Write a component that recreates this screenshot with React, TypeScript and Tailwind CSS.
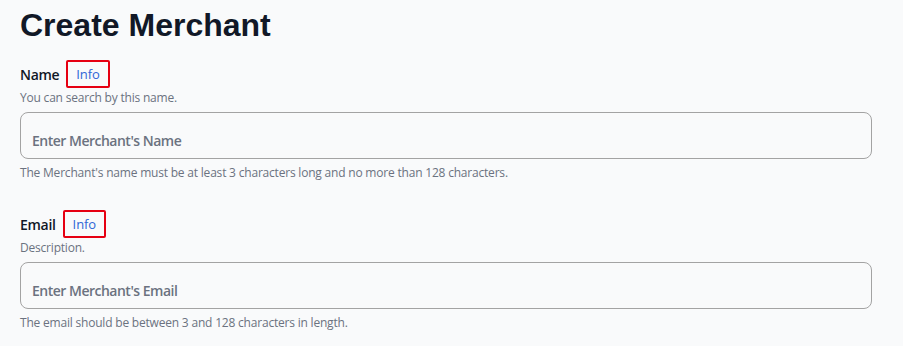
import React from "react";

const Field: React.FC<{
  label: string;
  hint: string;
  placeholder: string;
  rule: string;
}> = ({ label, hint, placeholder, rule }) => (
  <div className="flex flex-col">
    <div className="flex items-center gap-[7px] h-[28px]">
      <span className="text-[14px] font-semibold text-[#111827] tracking-[-0.3px]">
        {label}
      </span>
      <span className="rounded-[2px] border-2 border-[#e60012] px-[8px] py-[3px] text-[13px] text-[#2f66d6] leading-[18px] tracking-[-0.1px]">
        Info
      </span>
    </div>
    <p className="mt-[2px] text-[12px] text-[#6b7280] leading-[16px] tracking-[-0.2px]">
      {hint}
    </p>
    <input
      placeholder={placeholder}
      className="mt-[6px] h-[47px] w-full rounded-lg border border-[#a3a3a3] bg-[#f9fafb] px-[11px] pt-[9px] text-[14px] font-semibold tracking-[-0.5px] placeholder:text-[#6b7280] outline-none"
    />
    <p className="mt-[6px] text-[12px] text-[#6b7280] leading-[16px] tracking-[-0.2px]">
      {rule}
    </p>
  </div>
);

export default function App() {
  return (
    <div
      className="min-h-screen bg-[#f9fafb] px-[20px] pr-[31px] pt-[5px]"
      style={{ fontFamily: '"Open Sans", sans-serif' }}
    >
      <h1
        className="text-[32px] font-bold text-[#111827] leading-[40px]"
        style={{ fontFamily: '"Liberation Sans", Arial, sans-serif' }}
      >
        Create Merchant
      </h1>
      <div className="mt-[15px] flex flex-col gap-[29px]">
        <Field
          label="Name"
          hint="You can search by this name."
          placeholder="Enter Merchant's Name"
          rule="The Merchant's name must be at least 3 characters long and no more than 128 characters."
        />
        <Field
          label="Email"
          hint="Description."
          placeholder="Enter Merchant's Email"
          rule="The email should be between 3 and 128 characters in length."
        />
      </div>
    </div>
  );
}
